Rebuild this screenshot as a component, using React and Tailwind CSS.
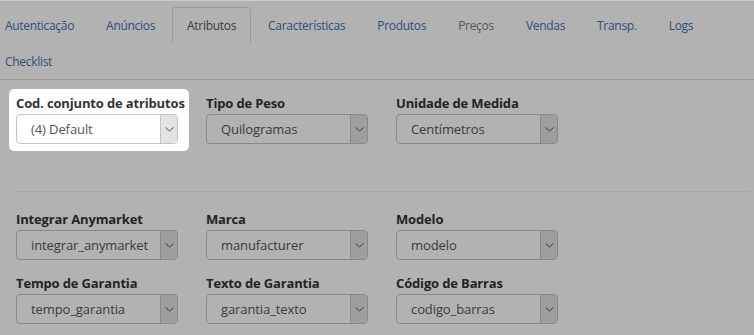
import React from 'react';

const tabs = [
  { label: 'Autenticação' },
  { label: 'Anúncios' },
  { label: 'Atributos', active: true },
  { label: 'Características' },
  { label: 'Produtos' },
  { label: 'Preços', muted: true },
  { label: 'Vendas' },
  { label: 'Transp.' },
  { label: 'Logs' },
  { label: 'Checklist' },
];

function Select({ value }) {
  return (
    <div className="flex h-[30px] w-[162px] rounded-[4px] border border-[#c4c4c4] bg-white">
      <span className="flex-1 truncate pl-[14px] text-[13px] leading-[28px] tracking-[-0.1px] text-[#555]">{value}</span>
      <span className="flex w-[17px] items-center justify-center rounded-r-[3px] border-l border-[#c4c4c4] bg-[#e3e3e3]">
        <svg width="9" height="5" viewBox="0 0 9 5" fill="none">
          <path d="M0.5 0.5 L4.5 4 L8.5 0.5" stroke="#555" strokeWidth="1" />
        </svg>
      </span>
    </div>
  );
}

function Field({ label, value }) {
  return (
    <div className="w-[162px]">
      <div className="mb-[2px] whitespace-nowrap text-[13px] font-bold leading-[18px] tracking-[-0.15px] text-[#333]">{label}</div>
      <Select value={value} />
    </div>
  );
}

export default function App() {
  return (
    <div className="relative min-h-[335px] overflow-hidden bg-white font-['Open_Sans',sans-serif] text-[13px]">
      <div className="absolute inset-x-0 top-0 z-30 h-px bg-[#cbcbcb]" />

      <ul className="ml-[-10px] flex flex-wrap border-b border-[#ddd] pt-[7px] text-[12px] tracking-[-0.3px]">
        {tabs.map(t => (
          <li key={t.label} className="mr-[2px]">
            <span
              className={`block rounded-t-[4px] border px-[14px] pt-[9px] pb-[7px] leading-[18px] ${
                t.active
                  ? 'border-[#ddd] border-b-transparent bg-white text-[#555]'
                  : t.muted
                  ? 'border-transparent text-[#8a7a6c]'
                  : 'border-transparent text-[#3f72b0]'
              }`}
            >
              {t.label}
            </span>
          </li>
        ))}
      </ul>

      <div className="px-[16px] pt-[14px]">
        <div className="grid grid-cols-[190px_190px_190px]">
          <div className="relative z-20 w-[162px]">
            <div className="absolute -top-[5px] -bottom-[7px] -left-[7px] -right-[11px] rounded-[5px] bg-white" />
            <div className="relative">
              <Field label="Cod. conjunto de atributos" value="(4) Default" />
            </div>
          </div>
          <Field label="Tipo de Peso" value="Quilogramas" />
          <Field label="Unidade de Medida" value="Centímetros" />
        </div>

        <div className="mr-[-11px] mt-[47px] h-px bg-[#eee]" />

        <div className="mt-[18px] grid grid-cols-[190px_190px_190px] gap-y-[14px]">
          <Field label="Integrar Anymarket" value="integrar_anymarket" />
          <Field label="Marca" value="manufacturer" />
          <Field label="Modelo" value="modelo" />
          <Field label="Tempo de Garantia" value="tempo_garantia" />
          <Field label="Texto de Garantia" value="garantia_texto" />
          <Field label="Código de Barras" value="codigo_barras" />
        </div>
      </div>

      <div className="absolute inset-0 z-10 bg-black/30" />
    </div>
  );
}
